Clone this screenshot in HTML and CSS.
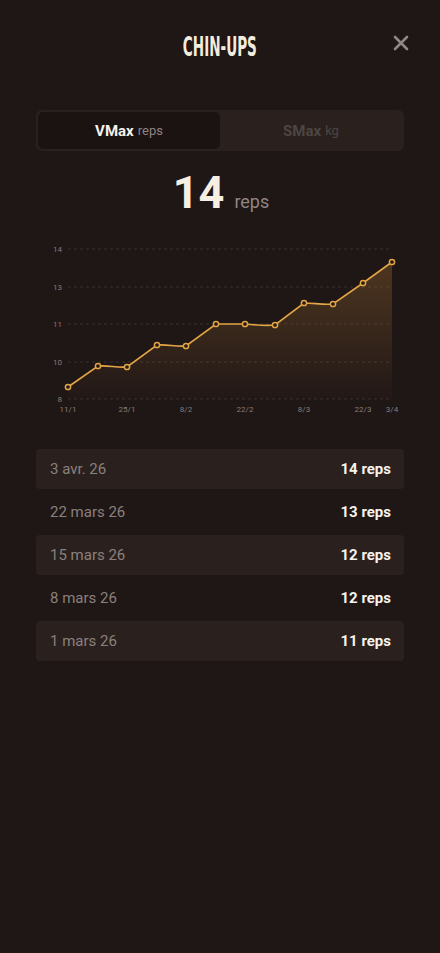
FILE: index.html
```html
<!DOCTYPE html>
<html lang="fr">
<head>
<meta charset="utf-8">
<link rel="stylesheet" href="styles.css">
</head>
<body>
<div class="screen">
  <header class="top">
    <h1 class="title">CHIN-UPS</h1>
    <button class="close" aria-label="Fermer">
      <svg width="16" height="16" viewBox="0 0 16 16"><path d="M2 2L14 14M14 2L2 14" stroke="#8e8887" stroke-width="2.6" stroke-linecap="round"/></svg>
    </button>
  </header>

  <div class="toggle">
    <div class="tab active"><b>VMax</b> <span>reps</span></div>
    <div class="tab"><b>SMax</b> <span>kg</span></div>
  </div>

  <div class="big"><span class="num">14</span><span class="unit">reps</span></div>

  <svg class="chart" width="368" height="178" viewBox="36 238 368 178">
    <defs>
      <linearGradient id="fill" x1="0" y1="0" x2="0" y2="1">
        <stop offset="0" stop-color="#b07a35" stop-opacity="0.32"/>
        <stop offset="1" stop-color="#b07a35" stop-opacity="0.02"/>
      </linearGradient>
    </defs>
    <g stroke="#3a302d" stroke-width="1" stroke-dasharray="3 3">
      <line x1="68" y1="249" x2="392" y2="249"/>
      <line x1="68" y1="287" x2="392" y2="287"/>
      <line x1="68" y1="324" x2="392" y2="324"/>
      <line x1="68" y1="362" x2="392" y2="362"/>
      <line x1="68" y1="399" x2="392" y2="399"/>
    </g>
    <g class="ylab" text-anchor="end">
      <text x="62" y="252">14</text>
      <text x="62" y="290">13</text>
      <text x="62" y="327">11</text>
      <text x="62" y="365">10</text>
      <text x="62" y="402">8</text>
    </g>
    <g class="xlab" text-anchor="middle">
      <text x="68" y="412">11/1</text>
      <text x="127" y="412">25/1</text>
      <text x="186" y="412">8/2</text>
      <text x="245" y="412">22/2</text>
      <text x="304" y="412">8/3</text>
      <text x="363" y="412">22/3</text>
      <text x="392" y="412">3/4</text>
    </g>
    <path d="M68 387 L98 366 C108 365 117 368 127 367 L157 345 C167 344 176 347 186 346 L216 324 C226 324 235 324 245 324 C255 325 265 326 275 325 L304 303 C314 303 323 305 333 304 L363 283 L392 262 L392 399 L68 399 Z" fill="url(#fill)"/>
    <path d="M68 387 L98 366 C108 365 117 368 127 367 L157 345 C167 344 176 347 186 346 L216 324 C226 324 235 324 245 324 C255 325 265 326 275 325 L304 303 C314 303 323 305 333 304 L363 283 L392 262" fill="none" stroke="#e3a545" stroke-width="1.6"/>
    <g fill="#231915" stroke="#e3a545" stroke-width="1.5">
      <circle cx="68" cy="387" r="2.6"/>
      <circle cx="98" cy="366" r="2.6"/>
      <circle cx="127" cy="367" r="2.6"/>
      <circle cx="157" cy="345" r="2.6"/>
      <circle cx="186" cy="346" r="2.6"/>
      <circle cx="216" cy="324" r="2.6"/>
      <circle cx="245" cy="324" r="2.6"/>
      <circle cx="275" cy="325" r="2.6"/>
      <circle cx="304" cy="303" r="2.6"/>
      <circle cx="333" cy="304" r="2.6"/>
      <circle cx="363" cy="283" r="2.6"/>
      <circle cx="392" cy="262" r="2.6"/>
    </g>
  </svg>

  <ul class="list">
    <li class="row shade"><span class="date">3 avr. 26</span><span class="val">14 reps</span></li>
    <li class="row"><span class="date">22 mars 26</span><span class="val">13 reps</span></li>
    <li class="row shade"><span class="date">15 mars 26</span><span class="val">12 reps</span></li>
    <li class="row"><span class="date">8 mars 26</span><span class="val">12 reps</span></li>
    <li class="row shade"><span class="date">1 mars 26</span><span class="val">11 reps</span></li>
  </ul>
</div>
</body>
</html>
```
FILE: styles.css
```css
* { box-sizing: border-box; }
html, body { margin: 0; padding: 0; }
body {
  background: #1f1616;
  font-family: Roboto, "Noto Sans", sans-serif;
  color: #f3ede4;
  width: 440px;
  min-height: 953px;
}
.screen { padding: 0 36px; }
.top {
  position: relative;
  height: 94px;
  display: flex;
  justify-content: center;
  align-items: flex-start;
  padding-top: 32px;
}
.title {
  margin: 0;
  font-family: "Liberation Sans Narrow", "DejaVu Sans Condensed", sans-serif;
  font-stretch: condensed;
  font-weight: 700;
  font-size: 26px;
  line-height: 30px;
  letter-spacing: 0;
  color: #f4ecdc;
  transform: scaleX(0.58);
}
.close {
  position: absolute;
  right: -6px;
  top: 34px;
  width: 18px;
  height: 18px;
  padding: 0;
  border: 0;
  background: none;
  display: flex;
  align-items: center;
  justify-content: center;
}
.toggle {
  margin-top: 16px;
  height: 41px;
  background: #2a201e;
  border-radius: 6px;
  padding: 2px;
  display: grid;
  grid-template-columns: 1fr 1fr;
}
.tab {
  display: flex;
  align-items: center;
  justify-content: center;
  gap: 4px;
  font-size: 15px;
  color: #4e4543;
  border-radius: 5px;
}
.tab b { font-weight: 700; }
.tab span { font-size: 13px; }
.tab.active { background: #1b1312; color: #f6f1ea; }
.tab.active span { color: #8d8482; }
.big {
  display: flex;
  justify-content: center;
  align-items: baseline;
  gap: 10px;
  margin-top: 17px;
  height: 50px;
  padding-left: 2px;
}
.num {
  font-size: 45px;
  font-weight: 700;
  color: #f6efe2;
  line-height: 50px;
}
.unit {
  font-size: 18px;
  color: #8f8683;
}
.chart {
  display: block;
  margin-top: 20px;
}
.ylab text, .xlab text {
  font-family: Roboto, sans-serif;
  font-size: 8px;
  fill: #857d7a;
}
.list {
  list-style: none;
  margin: 33px 0 0;
  padding: 0;
  display: flex;
  flex-direction: column;
  gap: 3px;
}
.row {
  height: 40px;
  display: flex;
  align-items: center;
  justify-content: space-between;
  padding: 0 13px 0 14px;
  border-radius: 4px;
}
.row.shade { background: #2a201e; }
.date { font-size: 15px; color: #8a807d; }
.val { font-size: 15px; font-weight: 700; color: #f7f2ec; }
```
